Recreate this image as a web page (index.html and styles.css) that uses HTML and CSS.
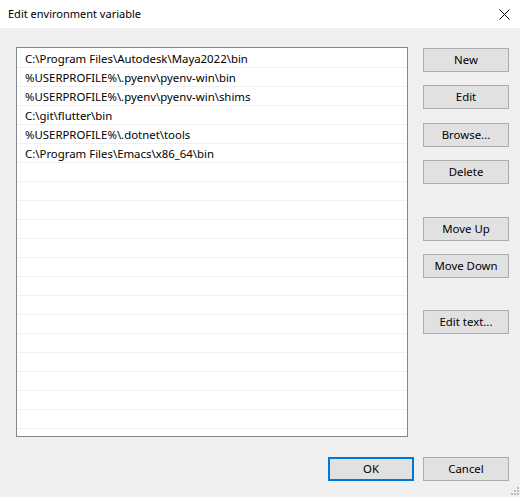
FILE: index.html
```html
<!DOCTYPE html>
<html lang="en">
<head>
    <meta charset="UTF-8">
    <title>Edit environment variable</title>
    <link rel="stylesheet" href="styles.css">
</head>
<body>

<div id="dialog">
    <div class="titlebar">
        <span class="title">Edit environment variable</span>
        <span class="close">
            <svg width="11" height="11" viewBox="0 0 11 11">
                <path d="M0.5 0.5 L10.5 10.5 M10.5 0.5 L0.5 10.5" stroke="#000" stroke-width="1" fill="none"/>
            </svg>
        </span>
    </div>

    <div class="content">
        <div class="main">
            <div class="listbox">
                <div class="row">C:\Program Files\Autodesk\Maya2022\bin</div>
                <div class="row">%USERPROFILE%\.pyenv\pyenv-win\bin</div>
                <div class="row">%USERPROFILE%\.pyenv\pyenv-win\shims</div>
                <div class="row">C:\git\flutter\bin</div>
                <div class="row">%USERPROFILE%\.dotnet\tools</div>
                <div class="row">C:\Program Files\Emacs\x86_64\bin</div>
                <div class="row"></div>
                <div class="row"></div>
                <div class="row"></div>
                <div class="row"></div>
                <div class="row"></div>
                <div class="row"></div>
                <div class="row"></div>
                <div class="row"></div>
                <div class="row"></div>
                <div class="row"></div>
                <div class="row"></div>
                <div class="row"></div>
                <div class="row"></div>
                <div class="row"></div>
                <div class="row"></div>
            </div>

            <div class="side">
                <button class="btn">New</button>
                <button class="btn gap-s">Edit</button>
                <button class="btn gap-m">Browse...</button>
                <button class="btn gap-s">Delete</button>
                <button class="btn gap-l">Move Up</button>
                <button class="btn gap-s">Move Down</button>
                <button class="btn gap-x">Edit text...</button>
            </div>
        </div>

        <div class="footer">
            <button class="btn default">OK</button>
            <button class="btn">Cancel</button>
        </div>
    </div>

    <svg class="grip" width="10" height="10" viewBox="0 0 10 10">
        <rect x="7" y="1" width="2" height="2" fill="#bcbcbc"/>
        <rect x="4" y="4" width="2" height="2" fill="#bcbcbc"/>
        <rect x="7" y="4" width="2" height="2" fill="#bcbcbc"/>
        <rect x="1" y="7" width="2" height="2" fill="#bcbcbc"/>
        <rect x="4" y="7" width="2" height="2" fill="#bcbcbc"/>
        <rect x="7" y="7" width="2" height="2" fill="#bcbcbc"/>
    </svg>
</div>

</body>
</html>
```

FILE: styles.css
```css
body {
    margin: 0;
    font-family: "Segoe UI", "Noto Sans", sans-serif;
    font-size: 11.4px;
    color: #000;
    background-color: #f0f0f0;
}

#dialog {
    position: relative;
    width: 520px;
    height: 497px;
    background-color: #f0f0f0;
}

.titlebar {
    height: 28px;
    background-color: #fff;
    display: flex;
    align-items: center;
    justify-content: space-between;
    padding-left: 8px;
}

.title {
    font-size: 11px;
    padding-bottom: 1px;
}

.close {
    width: 30px;
    display: flex;
    justify-content: center;
    padding-right: 1px;
}

.close svg {
    display: block;
}

.content {
    padding: 19px 11px 0 16px;
}

.main {
    display: flex;
    gap: 15px;
}

.listbox {
    width: 392px;
    height: 390px;
    box-sizing: border-box;
    border: 1px solid #828790;
    background-color: #fff;
    padding: 1px 1px 0 1px;
    overflow: hidden;
}

.row {
    height: 19px;
    box-sizing: border-box;
    border-bottom: 1px solid #f0f0f0;
    padding-left: 7px;
    line-height: 19px;
    white-space: nowrap;
}

.side {
    display: flex;
    flex-direction: column;
    padding-top: 1px;
}

.btn {
    width: 86px;
    height: 24px;
    box-sizing: border-box;
    background-color: #e1e1e1;
    border: 1px solid #adadad;
    font-family: inherit;
    font-size: 11.4px;
    color: #000;
    padding: 0 0 2px 0;
    margin: 0;
}

.gap-s {
    margin-top: 13px;
}

.gap-m {
    margin-top: 14px;
}

.gap-l {
    margin-top: 33px;
}

.gap-x {
    margin-top: 32px;
}

.footer {
    display: flex;
    justify-content: flex-end;
    gap: 9px;
    margin-top: 20px;
}

.default {
    border: 2px solid #0078d7;
}

.grip {
    position: absolute;
    right: 0;
    bottom: 1px;
}
```
